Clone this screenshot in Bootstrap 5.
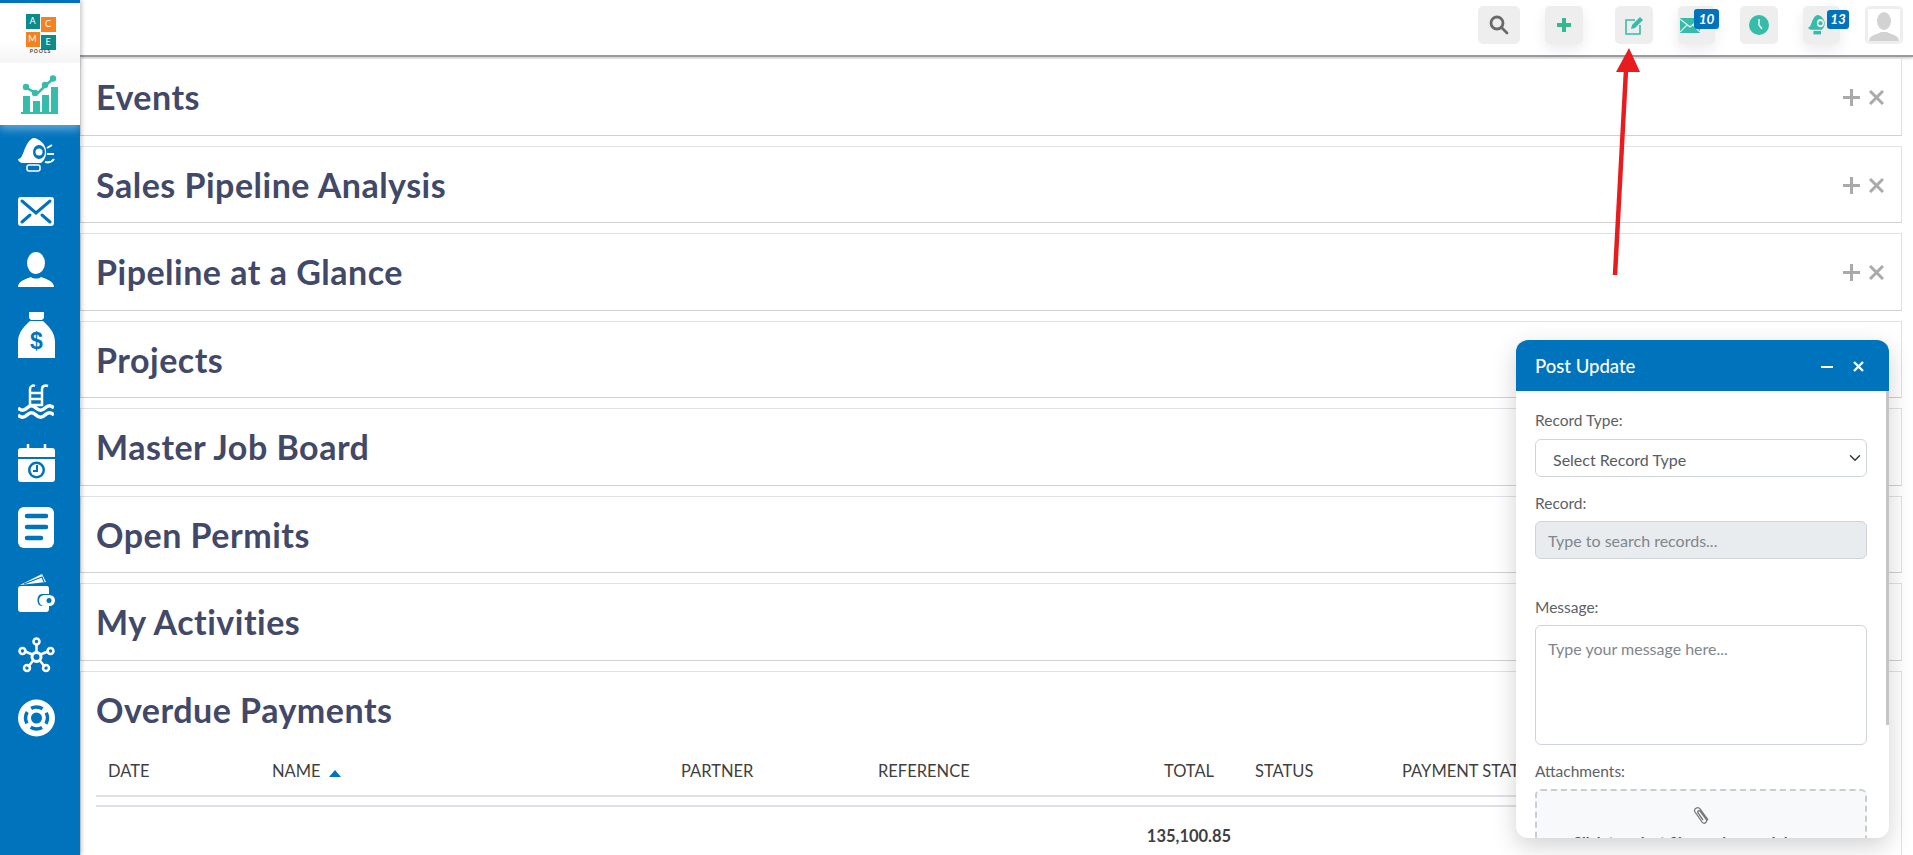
<!DOCTYPE html>
<html lang="en">
<head>
<meta charset="utf-8">
<title>Dashboard</title>
<link href="https://cdn.jsdelivr.net/npm/bootstrap@5.3.0/dist/css/bootstrap.min.css" rel="stylesheet">
<style>
html,body{height:855px;overflow:hidden}
body{font-family:"Lato","Noto Sans",sans-serif;background:#fff;color:#424868}
.app-shell{height:855px;position:relative;overflow:hidden}
.side-rail{width:80px;flex:none;background:#0073bd;height:855px;padding-top:3px;box-shadow:2px 0 4px rgba(0,0,0,.2);position:relative;z-index:2}
.rail-logo{height:60px;background:linear-gradient(#fff 60%,#f5f5f5);display:flex;flex-direction:column;align-items:center;padding-top:11px}
.logo-grid{width:30px;height:33px;display:grid;grid-template-columns:14px 15px;gap:0 1px;font-size:9px;line-height:14px;text-align:center;color:#fff;margin-left:1px}
.logo-grid span{height:15px}
.logo-t{background:#0c8b8c}
.logo-o{background:#f58220}
.logo-d{margin-top:3px}
.logo-word{font-size:5px;letter-spacing:1px;line-height:6px;color:#444;font-weight:700;margin-top:1px;margin-left:1px}
.rail-active{height:62px;background:#fff;display:flex;align-items:center;justify-content:center;box-shadow:0 5px 8px rgba(255,255,255,.35);position:relative}
.rail-list{display:flex;flex-direction:column;gap:25.4px;padding:13px 0 0 18px}
.rail-list svg{display:block}
.main-col{flex:1;min-width:0}
.top-strip{height:57px;border-bottom:2px solid #9a9a9a;box-shadow:0 1px 3px rgba(0,0,0,.25);display:flex;justify-content:flex-end;gap:25px;padding:6px 10px 0 0}
.tool-btn{flex:none;width:38px;height:38px;background:#eee;border-radius:5px;display:flex;align-items:center;justify-content:center;position:relative}
.tool-wide{width:42px}
.tool-narrow{width:37px;justify-content:flex-start}
.tool-lift{box-shadow:0 6px 14px rgba(0,0,0,.08)}
.tool-gap{margin-left:7px}
.tool-mail{padding-left:2px}
.tool-bell{padding-left:5px}
.tool-cnt{position:absolute;top:3px;right:-4px;background:#0073bd;color:#fff;font-size:13.5px;font-weight:700;font-style:italic;line-height:20px;width:25px;text-align:center;border-radius:3px}
.tool-cnt-alt{width:22px;right:-9px;top:4px;line-height:19px}
.stack{padding:1px 11px 0 0}
.fold{height:77.5px;border:1px solid #dee2e6;border-bottom-color:#d0d0d0;margin-bottom:10px;display:flex;align-items:center;justify-content:space-between;padding:2px 17px 0 15px;background:#fff}
.fold-title{font-size:34px;font-weight:700;line-height:1.2;margin:0;color:#424868;letter-spacing:.5px}
.fold-ctl{display:flex;gap:9px;align-items:center}
.fold-open{height:260px;display:block;padding:18px 15px 0 15px}
.pay-table{width:1790px;table-layout:fixed;margin:18px 0 0;font-size:16.5px;color:#3f3f3f}
.pay-table th{height:48px;padding:0 12px;font-weight:400;vertical-align:middle;border-bottom:2px solid #dee2e6;white-space:nowrap;color:#3f3f3f}
.pay-gap td{height:10px;padding:0;border-bottom:2px solid #dee2e6}
.pay-table .pay-sum td{height:59px;padding:0;border:0;font-weight:700;text-align:center;vertical-align:middle;color:#3f3f3f}
.col-a{width:164px}.col-b{width:409px}.col-c{width:197px}.col-d{width:269px}.col-e{width:108px}.col-f{width:147px}.col-g{width:496px}
.pay-table th.col-e{padding:0;text-align:center}
.sort-up{display:inline-block;border:6px solid transparent;border-bottom:7px solid #0073bd;border-top:0;vertical-align:middle;margin-left:4px}
.post-panel{position:absolute;left:1516px;top:340px;width:373px;height:498px;background:#fff;border-radius:12px;overflow:hidden;box-shadow:0 8px 24px rgba(0,0,0,.18);z-index:3}
.post-head{height:51px;background:#0073bd;color:#fff;font-size:18.5px;font-weight:500;padding:2px 25px 0 19px;display:flex;align-items:center;justify-content:space-between}
.post-ctl{display:flex;align-items:center;gap:20px}
.post-body{padding:17px 22px 0 19px;position:relative;font-size:15.5px;color:#5c6168}
.post-body label{display:block;line-height:24px;margin:0}
.post-bar{position:absolute;right:0;top:0;width:3px;height:334px;background:#c6c6c6}
.post-sel{height:38px;font-size:16px;padding:3px 30px 0 17px;color:#565c63;border-color:#ced4da;margin:7px 0 14px;border-radius:6px;background-position:right 3px center}
.post-inp{height:38px;font-size:16px;padding:0 12px;background:#e9ecef;border-color:#ced4da;margin:6px 0 36px;border-radius:6px}
.post-area{height:120px;font-size:16px;padding:11px 12px;border-color:#ced4da;margin:6px 0 14px;resize:none;border-radius:6px;display:block}
.post-inp::placeholder,.post-area::placeholder{color:#7f868d}
.post-drop{border:2px dashed #c9ccd1;background:#f8f9fa;height:100px;margin-top:6px;text-align:center;padding-top:15px;border-radius:6px;font-weight:700;font-size:15px;color:#495057}
.post-drop svg{display:block;margin:0 auto}
.drop-text{margin-top:6px;padding-right:20px}
.arrow-layer{position:absolute;left:1605px;top:45px;z-index:4}
</style>
</head>
<body>
<div class="app-shell d-flex">
<nav class="side-rail">
  <div class="rail-logo">
    <div class="logo-grid"><span class="logo-t">A</span><span class="logo-o logo-d">C</span><span class="logo-o">M</span><span class="logo-t logo-d">E</span></div>
    <div class="logo-word">POOLS</div>
  </div>
  <div class="rail-active">
    <svg width="38" height="39" viewBox="0 0 38 39" fill="#35bda9"><rect x="2" y="21" width="7" height="16"/><rect x="12" y="26" width="7" height="11"/><rect x="21" y="20" width="7" height="17"/><rect x="30" y="12" width="7" height="25"/><rect x="0" y="37" width="37" height="2"/><path d="M6 13 16 19 25 10 32 4" fill="none" stroke="#35bda9" stroke-width="2.500"/><circle cx="5" cy="12" r="3.200"/><circle cx="14" cy="18" r="3.200"/><circle cx="24" cy="10" r="3.200"/><circle cx="32" cy="3.500" r="3.200"/></svg>
  </div>
  <div class="rail-list">
    <svg width="37" height="34" viewBox="0 0 37 34" fill="#fff"><path d="M16 0c6 1 11 6 12 12s-2 11-5 13H5c-3 0-5-2-5-4 3 0 4-3 6-8 2-6 6-13 10-13z"/><ellipse cx="21" cy="14" rx="6" ry="7" fill="#0073bd"/><circle cx="21" cy="14" r="3.500"/><path d="M29 10l5-3M29 16h7M27 24c4 1 7 0 9-3" stroke="#fff" stroke-width="2" fill="none"/><rect x="9" y="27" width="13" height="6" rx="2" fill="none" stroke="#fff" stroke-width="1.500"/></svg>
    <svg width="36" height="29" viewBox="0 0 36 29"><rect width="36" height="29" rx="3" fill="#fff"/><path d="M4 4 18 16 32 4M4 25l8-7M32 25l-8-7" stroke="#0073bd" stroke-width="3" stroke-linecap="round" fill="none"/></svg>
    <svg width="36" height="35" viewBox="0 0 36 35" fill="#fff"><ellipse cx="18" cy="11" rx="9" ry="11"/><path d="M0 35c0-6 8-8 13-10 2 2 8 2 10 0 5 2 13 4 13 10z"/></svg>
    <svg width="37" height="46" viewBox="0 0 37 46" fill="#fff"><path d="M11 0h15v6l-2 2H13l-2-2zM12 9h13c4 4 12 10 12 21v16H0V30C0 19 8 13 12 9z"/><text x="18.500" y="37" font-size="23" font-weight="700" text-anchor="middle" fill="#0073bd" font-family="Liberation Sans">$</text></svg>
    <svg width="36" height="35" viewBox="0 0 36 35" fill="none" stroke="#fff"><path d="M12 22V5c0-3 3-4 5-3M24 22V5c0-3 3-4 6-3M12 9h12M12 15h12M12 21h12" stroke-width="2.500"/><path d="M0 24c3 3 6 3 9 0s6-3 9 0 6 3 9 0 6-3 9 0M0 31c3 3 6 3 9 0s6-3 9 0 6 3 9 0 6-3 9 0" stroke-width="3.500"/></svg>
    <svg width="37" height="38" viewBox="0 0 37 38" fill="#fff"><path d="M3 4h6v3h2V4h15v3h2V4h6c2 0 3 1 3 3v6H0V7c0-2 1-3 3-3zM0 15h37v20c0 2-1 3-3 3H3c-2 0-3-1-3-3z"/><path d="M10 0v7M27 0v7" stroke="#fff" stroke-width="2.500"/><circle cx="18.500" cy="26" r="8.500" fill="#0073bd"/><circle cx="18.500" cy="26" r="6" fill="#fff"/><path d="M19 21v6h-4" stroke="#0073bd" stroke-width="2" fill="none"/></svg>
    <svg width="36" height="41" viewBox="0 0 36 41"><rect width="36" height="41" rx="6" fill="#fff"/><path d="M9 9h19M9 20h19M9 31h14" stroke="#0073bd" stroke-width="4.500" stroke-linecap="round"/></svg>
    <svg width="37" height="38" viewBox="0 0 37 38" fill="#fff"><path d="M2 11 24 0l4 8z"/><path d="M3 12h26c1 0 2 1 2 2v6h-7c-6 0-6 12 0 12h7v3c0 2-1 3-3 3H3c-2 0-3-1-3-3V15c0-2 1-3 3-3z"/><rect x="21" y="21" width="16" height="11" rx="5.500"/><circle cx="31" cy="26.500" r="2.500" fill="#0073bd"/><path d="M6 10 24 3l2 5" stroke="#0073bd" fill="none" stroke-width="1.200"/></svg>
    <svg width="37" height="36" viewBox="0 0 37 36" fill="none" stroke="#fff" stroke-width="2.500"><path d="M18.500 8v10M6 14l12 5M31 14l-12 5M10 30l8-10M27 30l-8-10"/><circle cx="18.500" cy="4.500" r="3"/><circle cx="4.500" cy="14" r="3"/><circle cx="32.500" cy="14" r="3"/><circle cx="9" cy="31" r="3"/><circle cx="28" cy="31" r="3"/><circle cx="18.500" cy="20" r="4.500" fill="#0073bd" stroke-width="3"/></svg>
    <svg width="37" height="38" viewBox="0 0 37 37"><circle cx="18.500" cy="18.500" r="18.500" fill="#fff"/><circle cx="18.500" cy="18.500" r="11" fill="none" stroke="#0073bd" stroke-width="3.500" stroke-dasharray="12 5.300" stroke-dashoffset="6"/><circle cx="18.500" cy="18.500" r="5.500" fill="#0073bd"/></svg>
  </div>
</nav>
<main class="main-col">
  <div class="top-strip">
    <div class="tool-btn tool-wide"><svg width="20" height="20" viewBox="0 0 20 20" fill="none" stroke="#6a6a6a" stroke-width="2.800"><circle cx="8" cy="8" r="6"/><path d="M12.500 12.500 18 18" stroke-linecap="round"/></svg></div>
    <div class="tool-btn tool-lift"><svg width="14" height="14" viewBox="0 0 14 14" stroke="#35b88f" stroke-width="4"><path d="M7 0v14M0 7h14"/></svg></div>
    <div class="tool-btn tool-gap"><svg width="18" height="19" viewBox="0 0 18 19" fill="none" stroke="#35bda9" stroke-width="1.600"><path d="M10 4H1v14h14V9"/><path d="M6 13l1-4 8-8 3 3-8 8z" fill="#35bda9" stroke="none"/></svg></div>
    <div class="tool-btn tool-narrow tool-mail tool-lift"><svg width="20" height="15" viewBox="0 0 20 15"><rect width="20" height="15" fill="#35bda9"/><path d="M0 1l10 8 10-8M0 14l7-7M20 14l-7-7" stroke="#eee" stroke-width="1.200" fill="none"/></svg><span class="tool-cnt">10</span></div>
    <div class="tool-btn"><svg width="20" height="20" viewBox="0 0 20 20"><circle cx="10" cy="10" r="10" fill="#35bda9"/><path d="M10 4v6l3 4" stroke="#eee" stroke-width="1.600" fill="none"/></svg></div>
    <div class="tool-btn tool-narrow tool-bell tool-lift"><svg width="22" height="20" viewBox="0 0 37 34" fill="#35bda9"><path d="M16 0c6 1 11 6 12 12s-2 11-5 13H5c-3 0-5-2-5-4 3 0 4-3 6-8 2-6 6-13 10-13z"/><ellipse cx="21" cy="14" rx="6" ry="7" fill="#eee"/><circle cx="21" cy="14" r="3.500"/><path d="M9 27h13v6H9z"/></svg><span class="tool-cnt tool-cnt-alt">13</span></div>
    <div class="tool-btn"><svg width="32" height="32" viewBox="0 0 32 32"><rect width="32" height="32" fill="#fff"/><ellipse cx="16" cy="12" rx="7" ry="9" fill="#d2d2d2"/><path d="M1 32c0-6 9-7 12-9h6c3 2 12 3 12 9z" fill="#d2d2d2"/></svg></div>
  </div>
  <div class="stack">
    <section class="fold"><h2 class="fold-title">Events</h2><div class="fold-ctl"><svg width="17" height="17" viewBox="0 0 17 17" stroke="#aaa" stroke-width="3"><path d="M8.500 0v17M0 8.500h17"/></svg><svg width="15" height="15" viewBox="0 0 15 15" stroke="#aaa" stroke-width="3"><path d="M1 1l13 13M14 1 1 14"/></svg></div></section>
    <section class="fold"><h2 class="fold-title">Sales Pipeline Analysis</h2><div class="fold-ctl"><svg width="17" height="17" viewBox="0 0 17 17" stroke="#aaa" stroke-width="3"><path d="M8.500 0v17M0 8.500h17"/></svg><svg width="15" height="15" viewBox="0 0 15 15" stroke="#aaa" stroke-width="3"><path d="M1 1l13 13M14 1 1 14"/></svg></div></section>
    <section class="fold"><h2 class="fold-title">Pipeline at a Glance</h2><div class="fold-ctl"><svg width="17" height="17" viewBox="0 0 17 17" stroke="#aaa" stroke-width="3"><path d="M8.500 0v17M0 8.500h17"/></svg><svg width="15" height="15" viewBox="0 0 15 15" stroke="#aaa" stroke-width="3"><path d="M1 1l13 13M14 1 1 14"/></svg></div></section>
    <section class="fold"><h2 class="fold-title">Projects</h2></section>
    <section class="fold"><h2 class="fold-title">Master Job Board</h2></section>
    <section class="fold"><h2 class="fold-title">Open Permits</h2></section>
    <section class="fold"><h2 class="fold-title">My Activities</h2></section>
    <section class="fold fold-open">
      <h2 class="fold-title">Overdue Payments</h2>
      <table class="table pay-table">
        <thead><tr><th class="col-a">DATE</th><th class="col-b">NAME <i class="sort-up"></i></th><th class="col-c">PARTNER</th><th class="col-d">REFERENCE</th><th class="col-e">TOTAL</th><th class="col-f">STATUS</th><th class="col-g">PAYMENT STATUS</th></tr></thead>
        <tbody><tr class="pay-gap"><td colspan="7"></td></tr><tr class="pay-sum"><td></td><td></td><td></td><td></td><td>135,100.85</td><td></td><td></td></tr></tbody>
      </table>
    </section>
  </div>
</main>
<aside class="post-panel">
  <div class="post-head"><span>Post Update</span><span class="post-ctl"><svg width="12" height="12" viewBox="0 0 12 12" stroke="#fff" stroke-width="2"><path d="M0 6h12"/></svg><svg width="11" height="11" viewBox="0 0 11 11" stroke="#fff" stroke-width="2.400"><path d="M1 1l9 9M10 1l-9 9"/></svg></span></div>
  <div class="post-body">
    <div class="post-bar"></div>
    <label for="rt">Record Type:</label>
    <select id="rt" class="form-select post-sel"><option>Select Record Type</option></select>
    <label for="rc">Record:</label>
    <input id="rc" class="form-control post-inp" placeholder="Type to search records..." disabled>
    <label for="ms">Message:</label>
    <textarea id="ms" class="form-control post-area" placeholder="Type your message here..."></textarea>
    <label>Attachments:</label>
    <div class="post-drop"><svg width="17" height="19" viewBox="0 0 17 19" fill="none" stroke="#777" stroke-width="1.300"><path d="M15 14 7 3C5 0 0 3 2 6l7 10c2 3 6 0 4-3L7 5C6 4 4 5 5 7l5 7"/></svg><div class="drop-text">Click to select files or drag and drop</div></div>
  </div>
</aside>
<svg class="arrow-layer" width="40" height="235" viewBox="0 0 40 235"><path d="M10 230 21 25" stroke="#e81c1f" stroke-width="4.500"/><path d="M24 3 11 27H35z" fill="#e81c1f"/></svg>
</div>
<script src="https://cdn.jsdelivr.net/npm/bootstrap@5.3.0/dist/js/bootstrap.bundle.min.js"></script>
</body>
</html>
